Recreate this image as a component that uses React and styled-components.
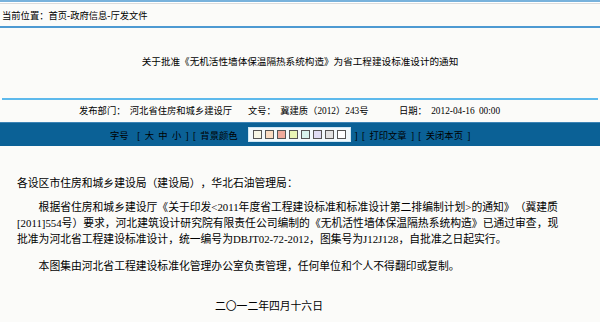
import styled, { createGlobalStyle } from "styled-components";

const GlobalStyle = createGlobalStyle`
  html, body {
    margin: 0;
    padding: 0;
    background: #fbfbf9;
  }
  body {
    font-family: "Liberation Serif", "Noto Sans CJK SC", serif;
    color: #000;
    text-spacing-trim: space-all;
  }
`;

const Page = styled.div`
  width: 600px;
  height: 322px;
  overflow: hidden;
`;

const Crumb = styled.div`
  border-top: 2px solid #78b2dc;
  border-bottom: 2px solid #4d9ad2;
  box-shadow: inset 0 1px 0 #fff, inset 0 2px 0 #dcdcdc;
  padding: 4px 2px 0;
  font-size: 9.3px;
  line-height: 20px;
`;

const Title = styled.div`
  margin: 0 2px;
  padding: 27px 0 29px;
  border-bottom: 2px solid #5db9ec;
  text-align: center;
  font-size: 9.6px;
  line-height: 14px;
`;

const Meta = styled.div`
  display: flex;
  padding-left: 79px;
  font-size: 9.3px;
  line-height: 22px;
  white-space: nowrap;
`;

const Field = styled.div`
  width: ${(p) => (p.$w ? `${p.$w}px` : "auto")};
  word-spacing: 2px;
`;

const Toolbar = styled.div`
  display: flex;
  align-items: center;
  height: 23px;
  padding-left: 110px;
  background: #0b6196;
  border-top: 1px solid #3c84b6;
  font-size: 9.3px;
  white-space: pre;
  word-spacing: 2px;
`;

const Swatches = styled.div`
  display: flex;
  gap: 3px;
  margin: 0 4px 0 10px;
  padding: 2px 4px;
  background: #f2f9fc;
  border: 1px solid #cfe6f3;
`;

const Swatch = styled.span`
  width: 7px;
  height: 7px;
  border: 1px solid #555;
  background: ${(p) => p.$color};
`;

const Body = styled.div`
  padding: 29px 0 0 17px;
  font-size: 10.8px;
  line-height: 16px;
  white-space: nowrap;
`;

const Para = styled.p`
  margin: ${(p) => p.$top || 0}px 0 0;
  text-indent: ${(p) => (p.$indent ? "2em" : "0")};
  padding-left: ${(p) => p.$left || 0}px;
`;

const colors = [
  "#f7f7e6",
  "#fbdcc2",
  "#efaa9c",
  "#e8f6b6",
  "#d8f3ec",
  "#e0ddf4",
  "#e2e2e2",
  "#ffffff",
];

export default function App() {
  return (
    <Page>
      <GlobalStyle />
      <Crumb>当前位置：首页-政府信息-厅发文件</Crumb>
      <Title>关于批准《无机活性墙体保温隔热系统构造》为省工程建设标准设计的通知</Title>
      <Meta>
        <Field $w={169}>发布部门： 河北省住房和城乡建设厅</Field>
        <Field $w={151}>文号： 冀建质（2012）243号</Field>
        <Field>日期： 2012-04-16 00:00</Field>
      </Meta>
      <Toolbar>
        {"字号  [ 大 中 小 ] [ 背景颜色"}
        <Swatches>
          {colors.map((c) => (
            <Swatch key={c} $color={c} />
          ))}
        </Swatches>
        {"] [ 打印文章 ] [ 关闭本页 ]"}
      </Toolbar>
      <Body>
        <Para>各设区市住房和城乡建设局（建设局），华北石油管理局：</Para>
        <Para $top={8} $indent>
          根据省住房和城乡建设厅《关于印发&lt;2011年度省工程建设标准和标准设计第二排编制计划&gt;的通知》（冀建质
          <br />
          [2011]554号）要求，河北建筑设计研究院有限责任公司编制的《无机活性墙体保温隔热系统构造》已通过审查，现
          <br />
          批准为河北省工程建设标准设计，统一编号为DBJT02-72-2012，图集号为J12J128，自批准之日起实行。
        </Para>
        <Para $top={11} $indent>
          本图集由河北省工程建设标准化管理办公室负责管理，任何单位和个人不得翻印或复制。
        </Para>
        <Para $top={24} $left={198}>
          二〇一二年四月十六日
        </Para>
      </Body>
    </Page>
  );
}
